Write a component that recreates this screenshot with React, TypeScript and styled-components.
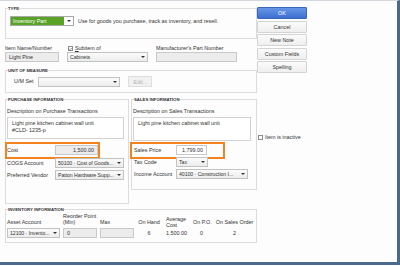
import React from "react";
import styled, { createGlobalStyle } from "styled-components";

const GlobalStyle = createGlobalStyle`
  html, body { margin: 0; padding: 0; background: #ffffff; }
  body {
    width: 400px;
    height: 266px;
    overflow: hidden;
    font-family: "Liberation Sans", Arial, sans-serif;
    color: #333;
  }
  * { box-sizing: border-box; }
`;

const Window = styled.div`
  width: 400px;
  height: 265px;
  display: flex;
  align-items: flex-start;
  padding: 5px 0 0 5px;
  background: #fdfdfd;
  border-top: 1px solid #d4d8dd;
  border-right: 3px solid #4a6a8b;
  border-bottom: 3px solid #4a6a8b;
`;

const MainCol = styled.div`
  width: 252px;
  display: flex;
  flex-direction: column;
`;

const Panel = styled.fieldset<{ $h?: number; $w?: number; $pl?: number; $mt?: number }>`
  margin: ${(p) => p.$mt ?? 0}px 0 0 0;
  padding: 0 3px 0 ${(p) => p.$pl ?? 1}px;
  border: 1px solid #dcdcdc;
  min-width: 0;
  display: flex;
  flex-direction: column;
  ${(p) => (p.$h ? `height: ${p.$h}px;` : "")}
  ${(p) => (p.$w ? `width: ${p.$w}px;` : "")}
`;

const Legend = styled.legend`
  padding: 0;
  margin-left: 1px;
  font-size: 4.3px;
  line-height: 5px;
  font-weight: bold;
  text-transform: uppercase;
  color: #333;
`;

const TypeRow = styled.div`
  display: flex;
  align-items: center;
  padding: 5px 0 0 3px;
`;

const TypeSelect = styled.div`
  width: 64px;
  height: 10px;
  display: flex;
  border: 1px solid #a8a8a8;
  background: #fff;
`;

const SelectedValue = styled.div`
  flex: 1;
  background: #58a225;
  color: #fff;
  font-size: 5.4px;
  line-height: 8px;
  padding-left: 2px;
`;

const ArrowBox = styled.div`
  width: 9px;
  display: flex;
  align-items: center;
  justify-content: center;
`;

const Arrow = styled.span`
  flex: none;
  width: 0;
  height: 0;
  border-left: 2px solid transparent;
  border-right: 2px solid transparent;
  border-top: 2px solid #333;
`;

const TypeDesc = styled.span`
  margin-left: 4px;
  font-size: 5.4px;
  line-height: 7px;
  white-space: nowrap;
`;

const ItemGrid = styled.div`
  margin-top: 6px;
  display: grid;
  grid-template-columns: 54px 81px 81px;
  column-gap: 8px;
`;

const Label = styled.span<{ $pl?: number }>`
  font-size: 5.4px;
  line-height: 7px;
  white-space: nowrap;
  padding-left: ${(p) => p.$pl ?? 0}px;
  display: flex;
  align-items: center;
  gap: 2px;
`;

const Check = styled.span`
  width: 5px;
  height: 5px;
  border: 1px solid #8c8c8c;
  background: #fff;
  display: inline-flex;
  align-items: center;
  justify-content: center;
`;

const Input = styled.div<{ $w?: number; $white?: boolean; $right?: boolean }>`
  height: 10px;
  ${(p) => (p.$w ? `width: ${p.$w}px;` : "")}
  border: 1px solid #c9c9c9;
  background: ${(p) => (p.$white ? "#fff" : "#ececec")};
  font-size: 5.4px;
  line-height: 8px;
  padding: 0 3px;
  text-align: ${(p) => (p.$right ? "right" : "left")};
  white-space: nowrap;
  overflow: hidden;
`;

const Select = styled.div<{ $w?: number }>`
  height: 10px;
  ${(p) => (p.$w ? `width: ${p.$w}px;` : "")}
  display: flex;
  align-items: center;
  border: 1px solid #c2c2c2;
  background: linear-gradient(#fbfbfb, #ececec);
  font-size: 5.2px;
  padding: 0 2px 0 2px;
  white-space: nowrap;
  gap: 1px;
`;

const SelectText = styled.span`
  flex: 1;
  min-width: 0;
  letter-spacing: -0.05px;
`;

const UomRow = styled.div`
  display: flex;
  align-items: center;
  padding: 3px 0 5px 7px;
`;

const EditButton = styled.div`
  margin-left: 8px;
  width: 24px;
  height: 11px;
  border: 1px solid #dedede;
  background: #f1f1f1;
  color: #b3b3b3;
  font-size: 5.4px;
  display: flex;
  align-items: center;
  justify-content: center;
`;

const InfoRow = styled.div`
  margin-top: 4px;
  display: flex;
  align-items: flex-start;
  gap: 2px;
`;

const SubLabel = styled.div`
  margin-top: 6px;
  font-size: 5.4px;
  line-height: 7px;
  white-space: nowrap;
`;

const TextArea = styled.div<{ $h: number; $w: number }>`
  margin-top: 2px;
  width: ${(p) => p.$w}px;
  height: ${(p) => p.$h}px;
  border: 1px solid #d2d2d2;
  background: #fff;
  font-size: 5.4px;
  line-height: 7px;
  padding: 2px 4px;
`;

const FieldRow = styled.div<{ $label: number; $mt: number; $pl?: number }>`
  position: relative;
  margin-top: ${(p) => p.$mt}px;
  padding-left: ${(p) => p.$pl ?? 0}px;
  display: grid;
  grid-template-columns: ${(p) => p.$label}px auto;
  justify-content: start;
  align-items: center;
  height: 10px;
`;

const Highlight = styled.div<{ $left: number }>`
  position: absolute;
  left: ${(p) => p.$left}px;
  top: -3px;
  width: 95px;
  height: 17px;
  border: 2px solid #f4821f;
  pointer-events: none;
`;

const InvGrid = styled.div`
  display: grid;
  grid-template-columns: 53px 34px 34px 24px 26px 17px 43px;
  grid-template-rows: 16px 10px;
  column-gap: 3px;
  padding: 0 0 4px 0;
`;

const InvHead = styled.div<{ $center?: boolean; $mb?: number; $pl?: number }>`
  align-self: end;
  font-size: 5.4px;
  line-height: 6px;
  margin-bottom: ${(p) => p.$mb ?? 3}px;
  padding-left: ${(p) => p.$pl ?? 0}px;
  text-align: ${(p) => (p.$center ? "center" : "left")};
  white-space: nowrap;
`;

const InvValue = styled.div<{ $center?: boolean; $pl?: number }>`
  align-self: center;
  font-size: 5.4px;
  line-height: 6px;
  padding-left: ${(p) => p.$pl ?? 0}px;
  text-align: ${(p) => (p.$center ? "center" : "left")};
  white-space: nowrap;
`;

const ButtonCol = styled.div`
  width: 51px;
  display: flex;
  flex-direction: column;
  gap: 1.5px;
  padding-top: 1px;
`;

const Button = styled.div<{ $primary?: boolean }>`
  width: 50px;
  height: 12px;
  border: 1px solid ${(p) => (p.$primary ? "#3a66bc" : "#d4d4d4")};
  border-radius: 1px;
  background: ${(p) =>
    p.$primary ? "linear-gradient(#6796e6, #3c6fd2)" : "linear-gradient(#fbfbfb, #efefef)"};
  color: ${(p) => (p.$primary ? "#fff" : "#333")};
  font-size: 5.4px;
  display: flex;
  align-items: center;
  justify-content: center;
`;

const Inactive = styled.div`
  margin-top: 59px;
  margin-left: 1px;
  display: flex;
  align-items: center;
  gap: 2px;
  font-size: 5.4px;
  line-height: 7px;
  white-space: nowrap;
`;

const Ul = styled.span`
  text-decoration: underline;
`;

const UomSelectWrap = styled.div`
  margin-left: 5px;
`;

const CheckMark = () => (
  <svg width="4" height="4" viewBox="0 0 8 8">
    <path d="M1 4.2 L3.2 6.3 L7 1.5" fill="none" stroke="#333" strokeWidth="1.4" />
  </svg>
);

const Dropdown = ({ w, children }: { w: number; children?: React.ReactNode }) => (
  <Select $w={w}>
    <SelectText>{children}</SelectText>
    <Arrow />
  </Select>
);

export default function App() {
  return (
    <>
      <GlobalStyle />
      <Window>
        <MainCol>
          <Panel $h={33}>
            <Legend>Type</Legend>
            <TypeRow>
              <TypeSelect>
                <SelectedValue>Inventory Part</SelectedValue>
                <ArrowBox>
                  <Arrow />
                </ArrowBox>
              </TypeSelect>
              <TypeDesc>Use for goods you purchase, track as inventory, and resell.</TypeDesc>
            </TypeRow>
          </Panel>

          <ItemGrid>
            <Label>Item Name/Number</Label>
            <Label $pl={1}>
              <Check>
                <CheckMark />
              </Check>
              <span>
                <Ul>S</Ul>ubitem of
              </span>
            </Label>
            <Label>Manufacturer's Part Number</Label>
            <Input>Light Pine</Input>
            <Dropdown w={81}>Cabinets</Dropdown>
            <Input />
          </ItemGrid>

          <Panel $mt={6}>
            <Legend>Unit of Measure</Legend>
            <UomRow>
              <Label>U/M Set</Label>
              <UomSelectWrap>
                <Dropdown w={82} />
              </UomSelectWrap>
              <EditButton>Edit...</EditButton>
            </UomRow>
          </Panel>

          <InfoRow>
            <Panel $w={124} $h={107}>
              <Legend>Purchase Information</Legend>
              <SubLabel>Description on Purchase Transactions</SubLabel>
              <TextArea $w={117} $h={22}>
                Light pine kitchen cabinet wall unit
                <br />
                #CLD- 1235-p
              </TextArea>
              <FieldRow $label={48} $mt={6}>
                <Label>Cost</Label>
                <Input $w={43} $right>
                  1,500.00
                </Input>
                <Highlight $left={-2} />
              </FieldRow>
              <FieldRow $label={48} $mt={3}>
                <Label>COGS Account</Label>
                <Dropdown w={69}>50100 · Cost of Goods...</Dropdown>
              </FieldRow>
              <FieldRow $label={48} $mt={2}>
                <Label>Preferred Vendor</Label>
                <Dropdown w={69}>Patton Hardware Supp...</Dropdown>
              </FieldRow>
            </Panel>

            <Panel $w={126} $h={93} $pl={1}>
              <Legend>Sales Information</Legend>
              <SubLabel>Description on Sales Transactions</SubLabel>
              <TextArea $w={118} $h={24}>
                Light pine kitchen cabinet wall unit
              </TextArea>
              <FieldRow $label={42} $mt={4} $pl={1}>
                <Label>Sales Price</Label>
                <Input $w={31} $white $right>
                  1,799.00
                </Input>
                <Highlight $left={-3} />
              </FieldRow>
              <FieldRow $label={42} $mt={2} $pl={1}>
                <Label>Tax Code</Label>
                <Dropdown w={32}>Tax</Dropdown>
              </FieldRow>
              <FieldRow $label={42} $mt={2} $pl={1}>
                <Label>Income Account</Label>
                <Dropdown w={72}>40100 · Construction I...</Dropdown>
              </FieldRow>
            </Panel>
          </InfoRow>

          <Panel $mt={3}>
            <Legend>Inventory Information</Legend>
            <InvGrid>
              <InvHead>Asset Account</InvHead>
              <InvHead>
                Reorder Point
                <br />
                (Min)
              </InvHead>
              <InvHead>Max</InvHead>
              <InvHead $center>On Hand</InvHead>
              <InvHead $mb={0} $pl={2}>
                Average
                <br />
                Cost
              </InvHead>
              <InvHead $center>On P.O.</InvHead>
              <InvHead $center>On Sales Order</InvHead>

              <Dropdown w={53}>12100 · Invento...</Dropdown>
              <Input>0</Input>
              <Input />
              <InvValue $center>6</InvValue>
              <InvValue $pl={2}>1,500.00</InvValue>
              <InvValue $center>0</InvValue>
              <InvValue $center>2</InvValue>
            </InvGrid>
          </Panel>
        </MainCol>

        <ButtonCol>
          <Button $primary>OK</Button>
          <Button>Cancel</Button>
          <Button>New Note</Button>
          <Button>Custom Fields</Button>
          <Button>Spelling</Button>
          <Inactive>
            <Check />
            Item is inactive
          </Inactive>
        </ButtonCol>
      </Window>
    </>
  );
}
